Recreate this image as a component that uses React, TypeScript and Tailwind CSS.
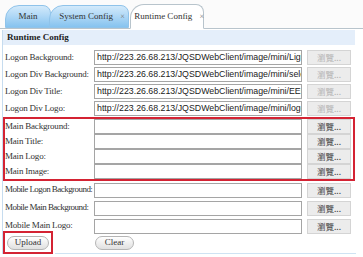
import { type ReactNode } from 'react'

const serif = 'font-["Liberation_Serif","Times_New_Roman",serif]'
const url = 'http://223.26.68.213/JQSDWebClient/image/mini/'

type Row = { label: string; value?: string; tight?: boolean }

const logonRows: Row[] = [
    { label: 'Logon Background:', value: url + 'LightBlue.jpg' },
    { label: 'Logon Div Background:', value: url + 'selectbg.png' },
    { label: 'Logon Div Title:', value: url + 'EEPTitle.png' },
    { label: 'Logon Div Logo:', value: url + 'logo2.png' },
]
const mainRows: Row[] = [
    { label: 'Main Background:' },
    { label: 'Main Title:' },
    { label: 'Main Logo:' },
    { label: 'Main Image:' },
]
const mobileRows: Row[] = [
    { label: 'Mobile Logon Background:', tight: true },
    { label: 'Mobile Main Background:', tight: true },
    { label: 'Mobile Main Logo:' },
]

function Browse({ disabled }: { disabled?: boolean }) {
    return (
        <div
            className={`ml-[5px] flex h-[15px] w-[44px] shrink-0 items-center justify-center border border-[#d4d4d4] bg-[#ececec] text-[8.5px] leading-none font-["Noto_Sans_CJK_TC",sans-serif] ${disabled ? 'text-[#b5b5b5]' : 'text-[#444]'}`}
        >
            瀏覽...
        </div>
    )
}

function FieldRow({ row, h }: { row: Row; h: string }) {
    return (
        <div className={`flex ${h} items-center`}>
            <div className={`w-[89px] shrink-0 text-[9px] whitespace-nowrap text-[#333] ${row.tight ? 'tracking-[-0.55px]' : 'tracking-[-0.2px]'} ${serif}`}>
                {row.label}
            </div>
            <div className="flex h-[15px] w-[208px] shrink-0 items-center overflow-hidden border border-[#a5a5a5] bg-white px-[2px] text-[8.8px] leading-none whitespace-nowrap text-[#222] font-['Liberation_Sans',Arial,sans-serif]">
                {row.value}
            </div>
            <Browse disabled={!!row.value} />
        </div>
    )
}

function Tab({ children, active, close, className = '' }: { children: ReactNode; active?: boolean; close?: boolean; className?: string }) {
    return (
        <div
            className={`flex items-center justify-center rounded-tl-[14px] rounded-tr-[8px] border text-[9px] whitespace-nowrap text-[#333] ${serif} ${
                active
                    ? 'h-[25px] -mb-px border-[#b8c4cc] border-b-white bg-white'
                    : 'h-[23px] border-[#8fc3ea] bg-gradient-to-b from-[#d3eafb] to-[#86c3ef]'
            } ${className}`}
        >
            {children}
            {close && <span className="ml-[7px] text-[8px] text-[#777]">×</span>}
        </div>
    )
}

export default function App() {
    return (
        <div className="h-[257px] w-[363px] overflow-hidden bg-white">
            <div className="flex h-[29px] items-end border-b border-[#b8c4cc] bg-[#fbfbfb] pl-[5px]">
                <Tab className="w-[46px]">Main</Tab>
                <Tab className="-ml-[2px] w-[80px] pl-[6px]" close>System Config</Tab>
                <Tab className="ml-px w-[74px] pl-[4px]" active close>Runtime Config</Tab>
            </div>
            <div className="mx-[2px] mt-px w-[353px] border-l border-[#c6dcef]">
                <div className={`flex h-[15px] items-center bg-[#e4eefa] pl-[4px] text-[9px] font-bold text-[#222] ${serif}`}>
                    Runtime Config
                </div>
                <div className="pt-[4px] pl-[2px]">
                    {logonRows.map((r) => (
                        <FieldRow key={r.label} row={r} h="h-[17px]" />
                    ))}
                    <div className="-ml-[2px] w-[352px] border-2 border-[#d42333]">
                        {mainRows.map((r) => (
                            <FieldRow key={r.label} row={r} h="h-[15px]" />
                        ))}
                    </div>
                    {mobileRows.map((r) => (
                        <FieldRow key={r.label} row={r} h="h-[18px]" />
                    ))}
                    <div className="-mt-[4px] flex items-center">
                        <div className="-ml-[2px] flex h-[23px] w-[50px] items-center justify-center border-2 border-[#d42333]">
                            <button className={`h-[14px] w-[42px] rounded-full border border-[#b5b5b5] bg-gradient-to-b from-white to-[#e0e0e0] text-[9px] leading-none text-[#333] ${serif}`}>
                                Upload
                            </button>
                        </div>
                        <button className={`ml-[42px] h-[14px] w-[39px] rounded-full border border-[#b5b5b5] bg-gradient-to-b from-white to-[#e0e0e0] text-[9px] leading-none text-[#333] ${serif}`}>
                            Clear
                        </button>
                    </div>
                    <div className="-mt-[1px] ml-[50px] h-px w-[301px] bg-[#cfe3f3]" />
                </div>
            </div>
        </div>
    )
}
